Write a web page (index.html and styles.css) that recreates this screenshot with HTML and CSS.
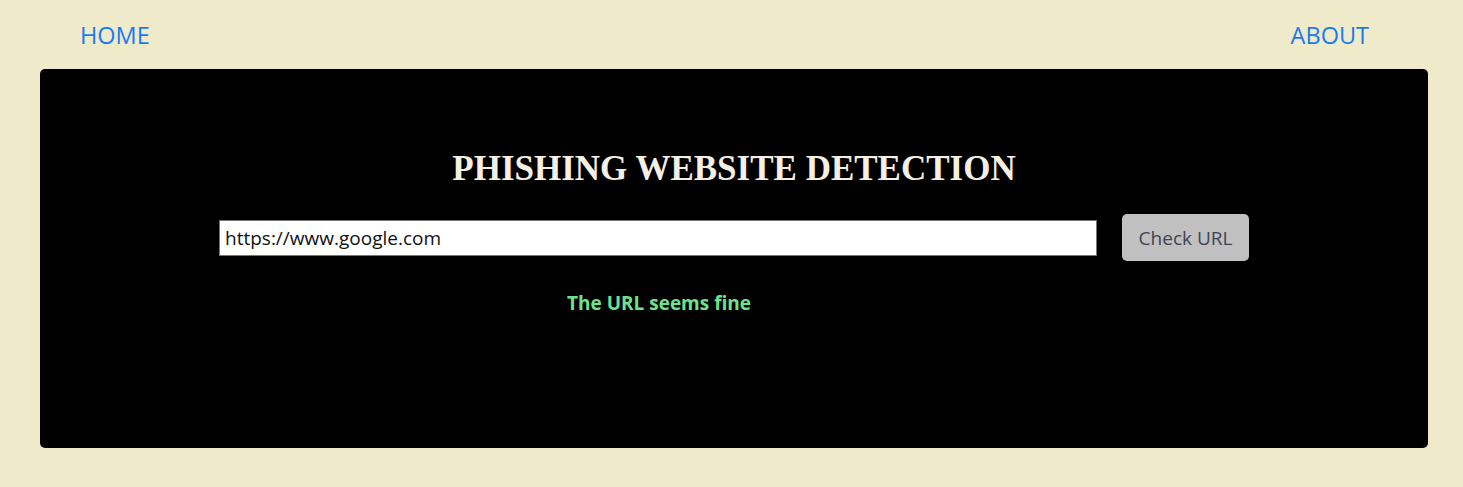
FILE: index.html
```html
<!DOCTYPE html>
<html>
<head>
<meta charset="utf-8">
<link rel="stylesheet" href="styles.css">
</head>
<body>
<nav class="nav">
  <a class="nav-link" href="#">HOME</a>
  <a class="nav-link" href="#">ABOUT</a>
</nav>
<main class="card">
  <h1 class="title">PHISHING WEBSITE DETECTION</h1>
  <form class="form">
    <input class="url-input" type="text" value="https://www.google.com">
    <button class="check-btn" type="button">Check URL</button>
  </form>
  <div class="result-row">
    <p class="result">The URL seems fine</p>
  </div>
</main>
</body>
</html>
```
FILE: styles.css
```css
html, body {
  margin: 0;
  padding: 0;
}
body {
  background: #efebca;
  font-family: "Open Sans", "Noto Sans", sans-serif;
  height: 487px;
  overflow: hidden;
}
.nav {
  display: flex;
  justify-content: space-between;
  padding: 0 94px 0 80px;
  height: 69px;
  align-items: center;
}
.nav-link {
  color: #1a7bf0;
  text-decoration: none;
  font-size: 23.5px;
}
.card {
  margin: 0 35px 0 40px;
  height: 379px;
  background: #000;
  border-radius: 5px;
  box-sizing: border-box;
  padding-top: 140px;
}
.title {
  margin: 0;
  text-align: center;
  font-family: "Liberation Serif", serif;
  font-weight: bold;
  font-size: 35px;
  color: #f6efe4;
  line-height: 40px;
  margin-top: -60px;
}
.form {
  display: flex;
  align-items: center;
  margin: 25px 0 0 179px;
  gap: 25px;
}
.url-input {
  width: 878px;
  height: 36px;
  box-sizing: border-box;
  border: 1px solid #767676;
  padding: 0 5px;
  font-family: "Open Sans", sans-serif;
  font-size: 19px;
  color: #111;
  outline: none;
}
.check-btn {
  width: 127px;
  height: 47px;
  background: #c0c0c0;
  border: none;
  border-radius: 5px;
  color: #3e4554;
  font-family: "Open Sans", sans-serif;
  font-size: 19px;
}
.result-row {
  padding-left: 527px;
}
.result {
  margin: 29px 0 0;
  color: #6ee38c;
  font-weight: bold;
  font-size: 19px;
}
```
